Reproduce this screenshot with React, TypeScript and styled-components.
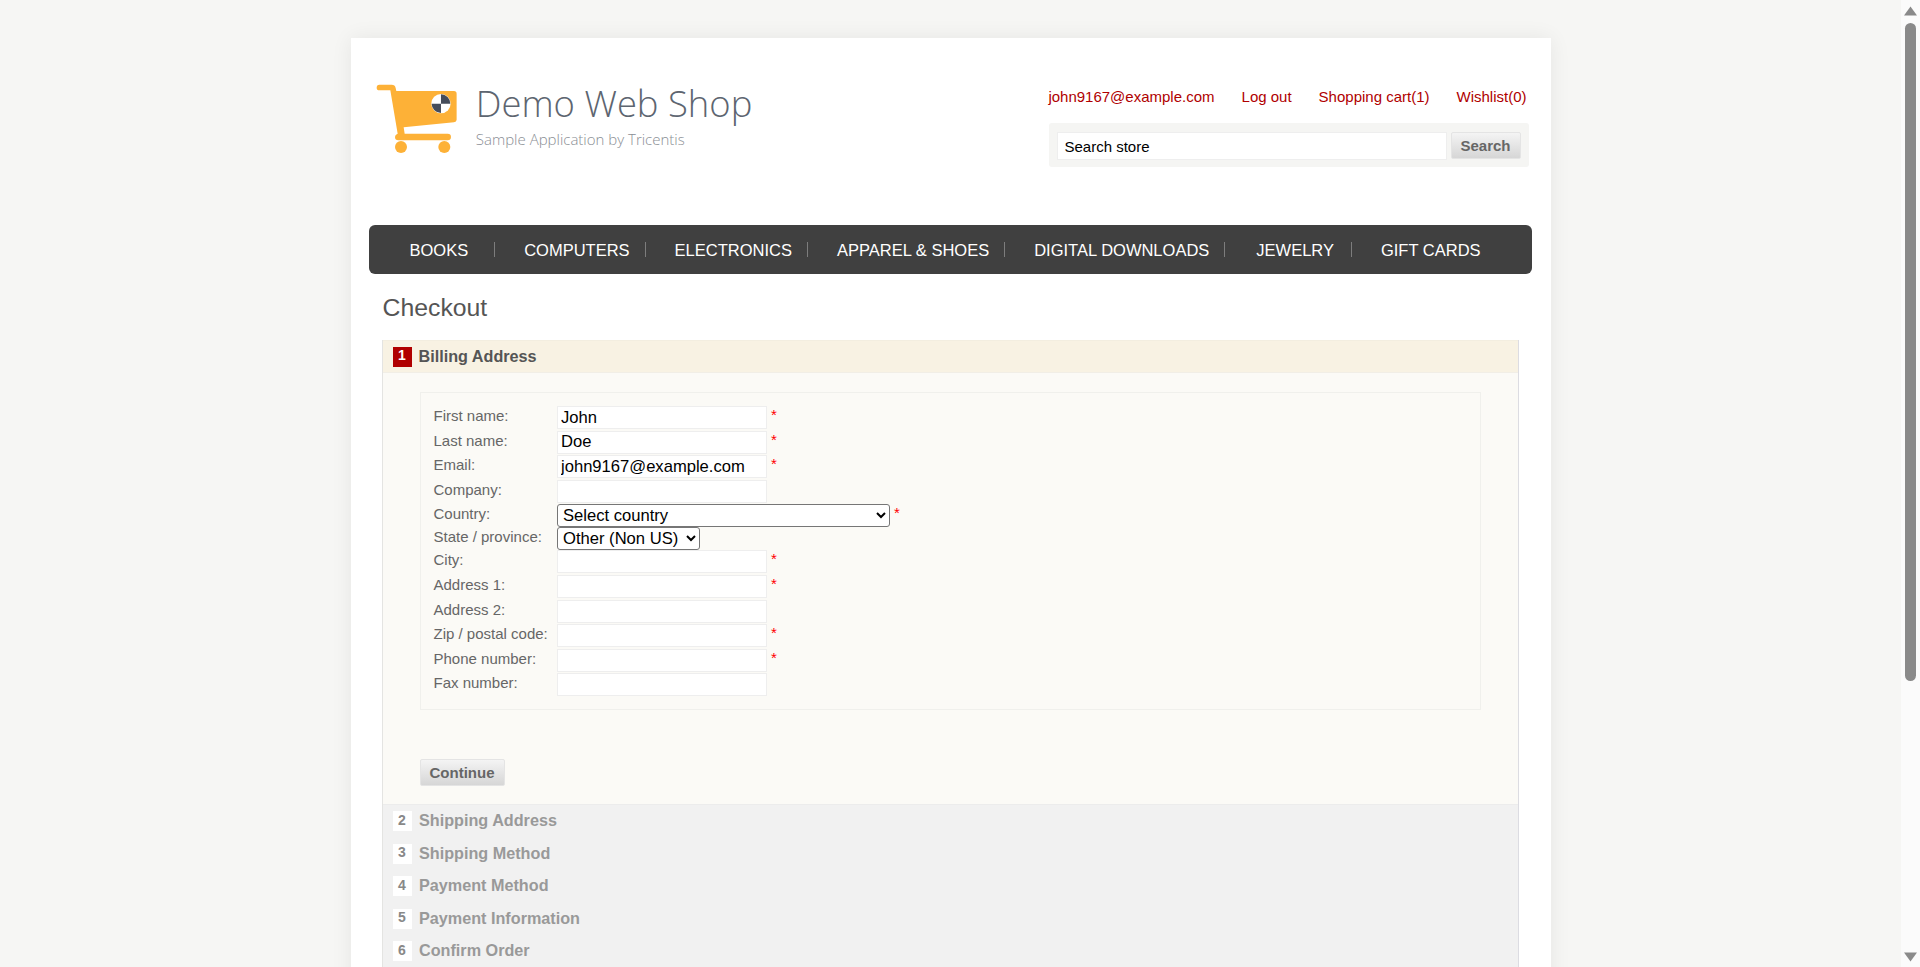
import React from 'react';
import styled, { createGlobalStyle } from 'styled-components';

const GlobalStyle = createGlobalStyle`
	body {
		margin: 0;
		background: #f6f6f4;
		font-family: 'Liberation Sans', Arial, sans-serif;
	}
`;

const Shell = styled.div`
	height: 100vh;
	display: flex;
	overflow: hidden;
`;

const Page = styled.div`
	flex: 1;
	min-width: 0;
	padding-top: 38px;
	height: 1349px;
	box-sizing: border-box;
`;

const Rail = styled.div`
	flex: none;
	width: 19px;
	height: 100%;
	display: flex;
	flex-direction: column;
	align-items: center;
	background: #fbfbfb;
`;

const RailArrow = styled.svg`
	flex: none;
	margin: 6px 0 5px;
`;

const RailTrack = styled.div`
	flex: 1;
	width: 100%;
	display: flex;
	justify-content: center;
`;

const RailThumb = styled.div`
	width: 11px;
	height: 658px;
	margin-top: 2px;
	background: #8a8a8a;
	border-radius: 6px;
`;

const Master = styled.div`
	width: 1200px;
	height: 100%;
	margin: 0 auto;
	padding: 0 19px 0 18px;
	box-sizing: border-box;
	background: #fff;
	box-shadow: 0 0 20px rgba(0, 0, 0, 0.07);
`;

const Header = styled.header`
	height: 187px;
	display: flex;
	justify-content: space-between;
	align-items: flex-start;
`;

const LogoLink = styled.a`
	display: flex;
	align-items: flex-start;
	gap: 18px;
	margin: 44px 0 0 6px;
	color: inherit;
	text-decoration: none;
`;

const LogoCopy = styled.div`
	display: flex;
	flex-direction: column;
	font-family: 'Open Sans', sans-serif;
	font-weight: 300;
`;

const LogoTitle = styled.span`
	font-size: 36.4px;
	line-height: 44px;
	margin-top: -1px;
	color: #5d6570;
`;

const LogoTagline = styled.span`
	font-size: 15px;
	line-height: 20px;
	margin-top: 4px;
	color: #8a8e94;
`;

const HeaderRight = styled.div`
	display: flex;
	flex-direction: column;
	align-items: flex-end;
	margin-right: 3px;
`;

const HeaderLinks = styled.div`
	display: flex;
	gap: 27px;
	margin: 50px 2px 0 0;
	font-size: 15px;
	line-height: 18px;
`;

const RedLink = styled.a`
	color: #b00000;
	text-decoration: none;
`;

const SearchBox = styled.form`
	width: 480px;
	height: 44px;
	margin-top: 17px;
	padding: 9px 8px 0;
	box-sizing: border-box;
	display: flex;
	align-items: flex-start;
	gap: 4px;
	background: #f5f5f3;
	border-radius: 3px;
`;

const SearchInput = styled.input`
	width: 390px;
	height: 28px;
	padding: 0 7px;
	box-sizing: border-box;
	border: 1px solid #eeeeee;
	font: 15px 'Liberation Sans', Arial, sans-serif;
	color: #000;
	outline: none;
`;

const GreyButton = styled.button`
	padding: 0;
	box-sizing: border-box;
	border: 1px solid #e4e4e4;
	border-radius: 2px;
	background: linear-gradient(#f4f4f4, #d6d6d6);
	color: #666;
	font: bold 15px 'Liberation Sans', Arial, sans-serif;
`;

const SearchButton = styled(GreyButton)`
	width: 70px;
	height: 27px;
`;

const Nav = styled.ul`
	height: 49px;
	margin: 0;
	padding: 0 0 0 10px;
	list-style: none;
	display: flex;
	align-items: center;
	background: #404040;
	border-radius: 6px;
`;

const NavItem = styled.li<{ $left: number; $right: number; $last?: boolean }>`
	position: relative;
	padding: 0 ${(p) => p.$right}px 0 ${(p) => p.$left}px;
	color: #fff;
	font-size: 16.5px;
	line-height: 20px;
	white-space: nowrap;

	&::after {
		content: '';
		display: ${(p) => (p.$last ? 'none' : 'block')};
		position: absolute;
		top: 2px;
		right: 0;
		width: 1px;
		height: 15px;
		background: #7d7d7d;
	}
`;

const PageTitle = styled.h1`
	margin: 21px 0 19px 14px;
	font-size: 24.8px;
	line-height: 26px;
	font-weight: normal;
	color: #555;
`;

const Steps = styled.div`
	margin: 0 13px;
	border-left: 1px solid #e4e4e2;
	border-right: 1px solid #dcdce2;
`;

const ActiveHead = styled.div`
	height: 33px;
	padding-left: 10px;
	display: flex;
	align-items: center;
	gap: 7px;
	background: #f8f2e3;
	border-top: 1px solid #f3eee0;
	border-bottom: 1px solid #f1eee6;
	box-sizing: border-box;
`;

const StepNumber = styled.span<{ $active?: boolean }>`
	width: 19px;
	height: 20px;
	display: flex;
	align-items: center;
	justify-content: center;
	padding-bottom: 3px;
	box-sizing: border-box;
	font-size: 14px;
	font-weight: bold;
	color: ${(p) => (p.$active ? '#fff' : '#888')};
	background: ${(p) => (p.$active ? '#b00000' : '#fff')};
`;

const StepTitle = styled.h2<{ $active?: boolean }>`
	margin: -1px 0 0;
	font-size: 16.2px;
	line-height: 20px;
	color: ${(p) => (p.$active ? '#555' : '#999')};
`;

const StepBody = styled.div`
	height: 431px;
	padding: 19px 37px 0;
	box-sizing: border-box;
	background: #fbfaf6;
`;

const Fields = styled.div`
	height: 318px;
	padding: 13px 13px 0;
	box-sizing: border-box;
	border: 1px solid #f0f0ec;
`;

const FieldRow = styled.div<{ $select?: boolean }>`
	height: ${(p) => (p.$select ? 23 : 24.6)}px;
	display: flex;
	align-items: flex-start;
`;

const FieldLabel = styled.label`
	width: 123.5px;
	flex: none;
	font-size: 15px;
	line-height: 20.6px;
	color: #666;
`;

const TextField = styled.input`
	width: 210px;
	height: 23px;
	padding: 0 3px;
	box-sizing: border-box;
	border: 1px solid #eeeeee;
	background: #fff;
	font: 16.6px 'Liberation Sans', Arial, sans-serif;
	color: #000;
	outline: none;
`;

const SelectField = styled.select<{ $width: number }>`
	width: ${(p) => p.$width}px;
	height: 23px;
	padding-left: 1px;
	box-sizing: border-box;
	border: 1px solid #767676;
	border-radius: 3px;
	background: #fff;
	font: 16.6px 'Liberation Sans', Arial, sans-serif;
	color: #000;
	outline: none;
`;

const Required = styled.span`
	margin-left: 4px;
	font-size: 15px;
	line-height: 18px;
	color: #f00;
`;

const ContinueButton = styled(GreyButton)`
	width: 85px;
	height: 27px;
	margin-top: 49px;
`;

const PendingList = styled.div`
	padding-top: 6px;
	background: #f1f1f1;
	border-top: 1px solid #ececec;
	height: 300px;
	box-sizing: border-box;
`;

const PendingRow = styled.div`
	height: 32.5px;
	padding-left: 10px;
	display: flex;
	align-items: flex-start;
	gap: 7.5px;
`;

const navItems = [
	{ label: 'BOOKS', left: 31, right: 27 },
	{ label: 'COMPUTERS', left: 29, right: 16 },
	{ label: 'ELECTRONICS', left: 29, right: 16 },
	{ label: 'APPAREL & SHOES', left: 29, right: 16 },
	{ label: 'DIGITAL DOWNLOADS', left: 29, right: 16 },
	{ label: 'JEWELRY', left: 31, right: 18 },
	{ label: 'GIFT CARDS', left: 29, right: 0 },
];

const fields = [
	{ label: 'First name:', value: 'John', required: true },
	{ label: 'Last name:', value: 'Doe', required: true },
	{ label: 'Email:', value: 'john9167@example.com', required: true },
	{ label: 'Company:', value: '' },
];

const lowerFields = [
	{ label: 'City:', value: '', required: true },
	{ label: 'Address 1:', value: '', required: true },
	{ label: 'Address 2:', value: '' },
	{ label: 'Zip / postal code:', value: '', required: true },
	{ label: 'Phone number:', value: '', required: true },
	{ label: 'Fax number:', value: '' },
];

const pendingSteps = ['Shipping Address', 'Shipping Method', 'Payment Method', 'Payment Information', 'Confirm Order'];

const CartLogo = () => (
	<svg width="83.3" height="73.3" viewBox="30 35 250 220" fill="#fdb137">
		<path d="M43 43 H80 Q90 43 92 53 L94 62 H267 Q275 62 275 70 V148 Q275 155 267 156 L116 171 L119 190 H248 Q258 190 258 200 Q258 210 248 210 H100 Q90 210 90 200 Q90 192 98 190 L76 60 H43 Q35 60 35 52 Q35 43 43 43 Z" />
		<circle cx="108" cy="230" r="18" />
		<circle cx="238" cy="230" r="18" />
		<circle cx="228" cy="100" r="29" fill="#fff" />
		<path d="M228 72 A28 28 0 0 1 256 100 H228 Z M228 128 A28 28 0 0 1 200 100 H228 Z" fill="#454c5a" />
	</svg>
);

const FormField = ({ label, value, required }: { label: string; value: string; required?: boolean }) => (
	<FieldRow>
		<FieldLabel>{label}</FieldLabel>
		<TextField defaultValue={value} />
		{required && <Required>*</Required>}
	</FieldRow>
);

export default function App(): JSX.Element {
	return (
		<Shell>
			<GlobalStyle />
			<Page>
				<Master>
					<Header>
						<LogoLink href="#">
							<CartLogo />
							<LogoCopy>
								<LogoTitle>Demo Web Shop</LogoTitle>
								<LogoTagline>Sample Application by Tricentis</LogoTagline>
							</LogoCopy>
						</LogoLink>
						<HeaderRight>
							<HeaderLinks>
								<RedLink href="#">john9167@example.com</RedLink>
								<RedLink href="#">Log out</RedLink>
								<RedLink href="#">Shopping cart(1)</RedLink>
								<RedLink href="#">Wishlist(0)</RedLink>
							</HeaderLinks>
							<SearchBox>
								<SearchInput defaultValue="Search store" />
								<SearchButton type="button">Search</SearchButton>
							</SearchBox>
						</HeaderRight>
					</Header>
					<Nav>
						{navItems.map((item, i) => (
							<NavItem key={item.label} $left={item.left} $right={item.right} $last={i === navItems.length - 1}>
								{item.label}
							</NavItem>
						))}
					</Nav>
					<PageTitle>Checkout</PageTitle>
					<Steps>
						<ActiveHead>
							<StepNumber $active>1</StepNumber>
							<StepTitle $active>Billing Address</StepTitle>
						</ActiveHead>
						<StepBody>
							<Fields>
								{fields.map((field) => (
									<FormField key={field.label} {...field} />
								))}
								<FieldRow $select>
									<FieldLabel>Country:</FieldLabel>
									<SelectField $width={333} defaultValue="">
										<option value="">Select country</option>
									</SelectField>
									<Required>*</Required>
								</FieldRow>
								<FieldRow $select>
									<FieldLabel>State / province:</FieldLabel>
									<SelectField $width={143} defaultValue="">
										<option value="">Other (Non US)</option>
									</SelectField>
								</FieldRow>
								{lowerFields.map((field) => (
									<FormField key={field.label} {...field} />
								))}
							</Fields>
							<ContinueButton type="button">Continue</ContinueButton>
						</StepBody>
						<PendingList>
							{pendingSteps.map((title, i) => (
								<PendingRow key={title}>
									<StepNumber>{i + 2}</StepNumber>
									<StepTitle>{title}</StepTitle>
								</PendingRow>
							))}
						</PendingList>
					</Steps>
				</Master>
			</Page>
			<Rail>
				<RailArrow width="13" height="10" viewBox="0 0 13 10">
					<path d="M6.5 0.5 L13 9.5 H0 Z" fill="#8a8a8a" />
				</RailArrow>
				<RailTrack>
					<RailThumb />
				</RailTrack>
				<RailArrow width="13" height="10" viewBox="0 0 13 10">
					<path d="M6.5 9.5 L13 0.5 H0 Z" fill="#8a8a8a" />
				</RailArrow>
			</Rail>
		</Shell>
	);
}
